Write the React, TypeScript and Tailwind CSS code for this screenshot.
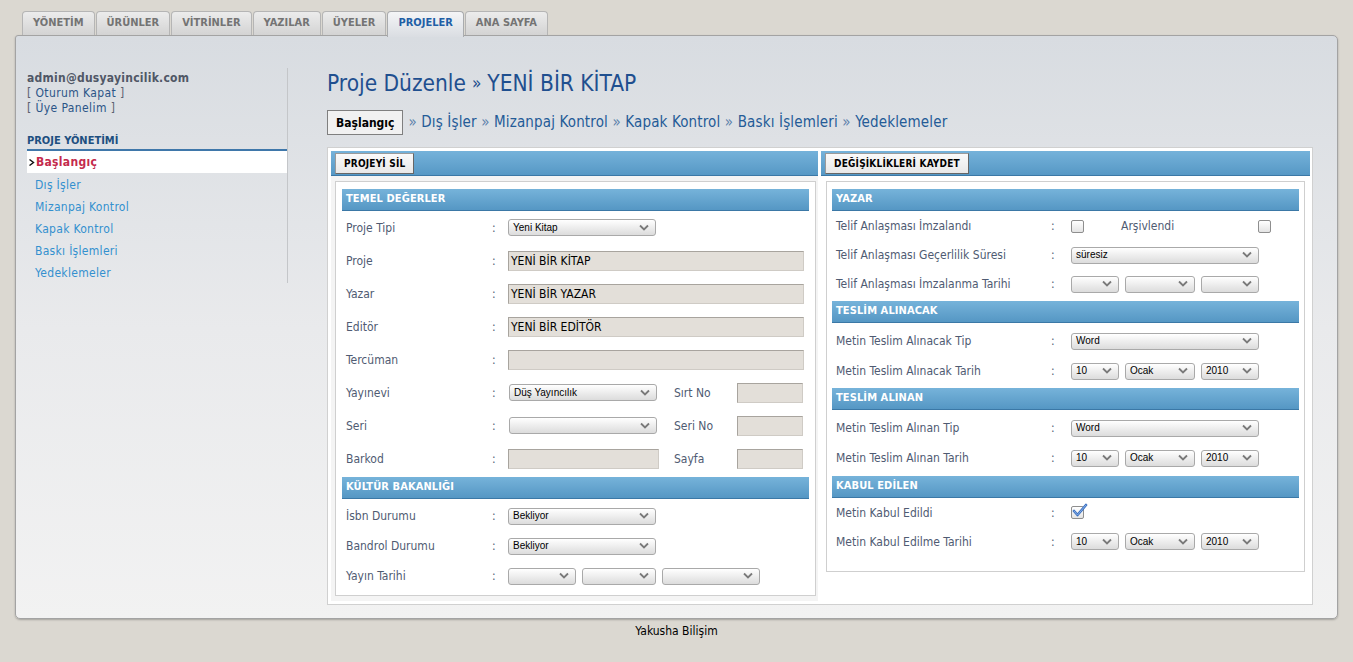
import React from "react";

const F = "font-['DejaVu_Sans_Condensed','DejaVu_Sans',sans-serif]";

function Chevron() {
  return (
    <svg width="10" height="7" viewBox="0 0 10 7" className="absolute right-[6px] top-1/2 -translate-y-1/2">
      <polyline points="1,1 5,5 9,1" fill="none" stroke="#7a7a7a" strokeWidth="1.8" />
    </svg>
  );
}

function Sel({ w, text = "" }: { w: string; text?: string }) {
  return (
    <div
      className={`relative flex h-[17px] shrink-0 items-center rounded-[3px] border border-[#a9a9a9] bg-gradient-to-b from-[#ffffff] to-[#dcdcdc] pl-[4px] font-['Liberation_Sans',Arial,sans-serif] text-[10px] text-black ${w}`}
    >
      <span className="leading-none">{text}</span>
      <Chevron />
    </div>
  );
}

function Inp({ w, text = "" }: { w: string; text?: string }) {
  return (
    <div
      className={`flex h-[20px] shrink-0 items-center border border-t-[#a8a49e] border-l-[#a8a49e] border-r-[#cfcbc5] border-b-[#cfcbc5] bg-[#e3dfd9] pl-[2px] text-[12px] text-black ${w}`}
    >
      {text}
    </div>
  );
}

function Check({ checked = false }: { checked?: boolean }) {
  return (
    <div className="relative h-[13px] w-[13px] shrink-0 rounded-[2px] border border-[#8e8e8e] bg-gradient-to-b from-[#ffffff] to-[#e4e4e4]">
      {checked && (
        <svg width="16" height="14" viewBox="0 0 16 14" className="absolute left-[0px] top-[-4px]">
          <path d="M2 8 L5.5 12 L14 2" fill="none" stroke="#3a6fc0" strokeWidth="2.6" strokeLinecap="round" strokeLinejoin="round" />
          <path d="M2 8 L5.5 12 L14 2" fill="none" stroke="#8fb6ea" strokeWidth="0.9" strokeLinecap="round" strokeLinejoin="round" />
        </svg>
      )}
    </div>
  );
}

function SecHead({ title, cls = "" }: { title: string; cls?: string }) {
  return (
    <div
      className={`flex h-[22px] items-center border-b border-[#3b78a6] bg-gradient-to-b from-[#76b3da] to-[#5597c4] pl-[4px] text-[11px] font-bold tracking-[0.1px] text-white ${cls}`}
    >
      {title}
    </div>
  );
}

function LRow({ label, h, children }: { label: string; h: string; children?: React.ReactNode }) {
  return (
    <div className={`flex items-center pl-[4px] ${h}`}>
      <div className="w-[146px] shrink-0 text-[12px] text-[#4f5b72]">{label}</div>
      <div className="w-[16px] shrink-0 text-[12px] text-[#4f5b72]">:</div>
      <div className="flex items-center">{children}</div>
    </div>
  );
}

function RRow({ label, h, children, cls = "" }: { label: string; h: string; children?: React.ReactNode; cls?: string }) {
  return (
    <div className={`flex items-center pl-[4px] ${h} ${cls}`}>
      <div className="w-[215px] shrink-0 text-[12px] text-[#4f5b72]">{label}</div>
      <div className="w-[20px] shrink-0 text-[12px] text-[#4f5b72]">:</div>
      <div className="flex items-center">{children}</div>
    </div>
  );
}

function Btn({ children }: { children: React.ReactNode }) {
  return (
    <div className="flex h-[21px] items-center border border-[#666] border-l-[#9a9a9a] border-t-[#9a9a9a] bg-gradient-to-b from-[#fafafa] to-[#e8e8e8] px-[8px] text-[10px] font-bold tracking-[0.2px] text-black">
      {children}
    </div>
  );
}

const tabs = ["YÖNETİM", "ÜRÜNLER", "VİTRİNLER", "YAZILAR", "ÜYELER", "PROJELER", "ANA SAYFA"];

export default function App() {
  return (
    <div className={`min-h-[662px] w-full bg-[#dbd8d1] ${F}`}>
      <div className="px-[15px] pt-[11px]">
        {/* tabs */}
        <div className="relative z-10 flex h-[24px] items-end gap-[1px] pl-[7px]">
          {tabs.map((t) =>
            t === "PROJELER" ? (
              <div
                key={t}
                className="mb-[-2px] flex h-[26px] items-center rounded-t-[4px] border border-b-0 border-[#a9abae] bg-gradient-to-b from-[#f4f5f7] to-[#dadde2] px-[10px] pb-[2px] text-[11px] font-bold text-[#1f5fa6]"
              >
                {t}
              </div>
            ) : (
              <div
                key={t}
                className="flex h-[24px] items-center rounded-t-[4px] border border-b-0 border-[#b5b5b5] bg-gradient-to-b from-[#ececec] to-[#d3d3d3] px-[10px] text-[11px] font-bold text-[#747474]"
              >
                {t}
              </div>
            )
          )}
        </div>

        {/* panel */}
        <div className="flex h-[584px] rounded-[5px] rounded-tl-[3px] border border-[#a3a3a3] bg-gradient-to-b from-[#d8dce1] via-[#e9eaec] to-[#f2f2f2] pl-[11px] pr-[24px] pt-[32px] shadow-[0_1px_2px_rgba(0,0,0,0.25)]">
          {/* sidebar */}
          <div className="w-[261px] shrink-0">
            <div className="h-[215px] border-r border-[#c4c6c9] pr-0">
              <div className="pt-[3px] text-[12px] font-bold leading-[15px] tracking-[0.25px] text-[#505766]">admin@dusyayincilik.com</div>
              <div className="text-[12px] leading-[15px] tracking-[0.4px] text-[#5b6270]">
                [ <span className="text-[#2b5587]">Oturum Kapat</span> ]
              </div>
              <div className="text-[12px] leading-[15px] tracking-[0.4px] text-[#5b6270]">
                [ <span className="text-[#2b5587]">Üye Panelim</span> ]
              </div>
              <div className="mt-[18px] border-b-2 border-[#3f77aa] pb-[1px] text-[11px] font-bold leading-[14px] text-[#1d4f80]">
                PROJE YÖNETİMİ
              </div>
              <div className="flex h-[22px] items-center bg-white pl-[2px] text-[12px] font-bold tracking-[0.3px] text-[#c42a4c]">
                <svg width="6" height="7" viewBox="0 0 6 7" className="mr-[1px]">
                  <path d="M0.5 0.5 L4.5 3.5 L0.5 6.5" fill="none" stroke="#111" strokeWidth="1.4" />
                </svg>
                Başlangıç
              </div>
              <div className="pt-[1px]">
                {["Dış İşler", "Mizanpaj Kontrol", "Kapak Kontrol", "Baskı İşlemleri", "Yedeklemeler"].map((m) => (
                  <div key={m} className="flex h-[22px] items-center pl-[8px] text-[12px] tracking-[0.3px] text-[#3390cf]">
                    {m}
                  </div>
                ))}
              </div>
            </div>
          </div>

          {/* main */}
          <div className="ml-[39px] flex-1">
            <div className="flex h-[28px] items-center pt-[2px] text-[22.5px] leading-none text-[#1f4f8f]">
              Proje Düzenle <span className="mx-[6px] text-[17px]">»</span> YENİ BİR KİTAP
            </div>
            <div className="mt-[14px] flex h-[25px] items-center">
              <div className="flex h-[25px] items-center border border-[#7f7f7f] bg-[#f1f1f1] px-[8px] text-[12px] font-bold text-black">
                Başlangıç
              </div>
              <div className="ml-[5px] text-[15px] tracking-[0.15px] text-[#245b97]">
                <span className="text-[#5b7faa]">»</span> Dış İşler <span className="text-[#5b7faa]">»</span> Mizanpaj Kontrol{" "}
                <span className="text-[#5b7faa]">»</span> Kapak Kontrol <span className="text-[#5b7faa]">»</span> Baskı İşlemleri{" "}
                <span className="text-[#5b7faa]">»</span> Yedeklemeler
              </div>
            </div>

            {/* form container */}
            <div className="mt-[12px] flex h-[458px] w-[986px] gap-[3px] border border-[#d0d0d0] bg-white p-[3px]">
              {/* left column */}
              <div className="w-[487px] shrink-0 bg-[#f4f4f4]">
                <div className="flex h-[25px] items-center border-b border-[#3b78a6] bg-gradient-to-b from-[#75b2da] to-[#5698c5] pl-[4px]">
                  <Btn>PROJEYİ SİL</Btn>
                </div>
                <div className="ml-[4px] mt-[5px] w-[481px] border border-[#cfcfcf] bg-white px-[6px] pb-[4px] pt-[7px]">
                  <SecHead title="TEMEL DEĞERLER" />
                  <LRow label="Proje Tipi" h="h-[33px]">
                    <Sel w="w-[148px]" text="Yeni Kitap" />
                  </LRow>
                  <LRow label="Proje" h="h-[33px]">
                    <Inp w="w-[296px]" text="YENİ BİR KİTAP" />
                  </LRow>
                  <LRow label="Yazar" h="h-[33px]">
                    <Inp w="w-[296px]" text="YENİ BİR YAZAR" />
                  </LRow>
                  <LRow label="Editör" h="h-[33px]">
                    <Inp w="w-[296px]" text="YENİ BİR EDİTÖR" />
                  </LRow>
                  <LRow label="Tercüman" h="h-[33px]">
                    <Inp w="w-[296px]" />
                  </LRow>
                  <LRow label="Yayınevi" h="h-[33px]">
                    <div className="ml-[1px]">
                      <Sel w="w-[148px]" text="Düş Yayıncılık" />
                    </div>
                    <div className="ml-[17px] w-[63px] text-[12px] text-[#4f5b72]">Sırt No</div>
                    <Inp w="w-[66px]" />
                  </LRow>
                  <LRow label="Seri" h="h-[33px]">
                    <div className="ml-[1px]">
                      <Sel w="w-[148px]" />
                    </div>
                    <div className="ml-[17px] w-[63px] text-[12px] text-[#4f5b72]">Seri No</div>
                    <Inp w="w-[66px]" />
                  </LRow>
                  <LRow label="Barkod" h="h-[33px]">
                    <Inp w="w-[151px]" />
                    <div className="ml-[15px] w-[63px] text-[12px] text-[#4f5b72]">Sayfa</div>
                    <Inp w="w-[66px]" />
                  </LRow>
                  <SecHead title="KÜLTÜR BAKANLIĞI" cls="mt-[2px]" />
                  <div className="mt-[2px]">
                    <LRow label="İsbn Durumu" h="h-[30px]">
                      <Sel w="w-[148px]" text="Bekliyor" />
                    </LRow>
                    <LRow label="Bandrol Durumu" h="h-[30px]">
                      <Sel w="w-[148px]" text="Bekliyor" />
                    </LRow>
                    <LRow label="Yayın Tarihi" h="h-[30px]">
                      <div className="flex gap-[6px]">
                        <Sel w="w-[68px]" />
                        <Sel w="w-[74px]" />
                        <Sel w="w-[98px]" />
                      </div>
                    </LRow>
                  </div>
                </div>
              </div>

              {/* right column */}
              <div className="w-[489px] shrink-0 bg-white">
                <div className="flex h-[25px] items-center border-b border-[#3b78a6] bg-gradient-to-b from-[#75b2da] to-[#5698c5] pl-[4px]">
                  <Btn>DEĞİŞİKLİKLERİ KAYDET</Btn>
                </div>
                <div className="ml-[5px] mt-[5px] w-[479px] border border-[#cfcfcf] bg-white px-[5px] pb-[15px] pt-[7px]">
                  <SecHead title="YAZAR" />
                  <RRow label="Telif Anlaşması İmzalandı" h="h-[30px]">
                    <Check />
                    <div className="ml-[37px] w-[137px] text-[12px] text-[#4f5b72]">Arşivlendi</div>
                    <Check />
                  </RRow>
                  <RRow label="Telif Anlaşması Geçerlilik Süresi" h="h-[28px]">
                    <Sel w="w-[188px]" text="süresiz" />
                  </RRow>
                  <RRow label="Telif Anlaşması İmzalanma Tarihi" h="h-[30px]">
                    <div className="flex gap-[6px]">
                      <Sel w="w-[48px]" />
                      <Sel w="w-[70px]" />
                      <Sel w="w-[58px]" />
                    </div>
                  </RRow>
                  <SecHead title="TESLİM ALINACAK" cls="mt-[2px]" />
                  <RRow label="Metin Teslim Alınacak Tip" h="h-[30px]" cls="mt-[3px]">
                    <Sel w="w-[188px]" text="Word" />
                  </RRow>
                  <RRow label="Metin Teslim Alınacak Tarih" h="h-[30px]">
                    <div className="flex gap-[6px]">
                      <Sel w="w-[48px]" text="10" />
                      <Sel w="w-[70px]" text="Ocak" />
                      <Sel w="w-[58px]" text="2010" />
                    </div>
                  </RRow>
                  <SecHead title="TESLİM ALINAN" cls="mt-[2px]" />
                  <RRow label="Metin Teslim Alınan Tip" h="h-[30px]" cls="mt-[3px]">
                    <Sel w="w-[188px]" text="Word" />
                  </RRow>
                  <RRow label="Metin Teslim Alınan Tarih" h="h-[30px]">
                    <div className="flex gap-[6px]">
                      <Sel w="w-[48px]" text="10" />
                      <Sel w="w-[70px]" text="Ocak" />
                      <Sel w="w-[58px]" text="2010" />
                    </div>
                  </RRow>
                  <SecHead title="KABUL EDİLEN" cls="mt-[3px]" />
                  <RRow label="Metin Kabul Edildi" h="h-[29px]">
                    <Check checked />
                  </RRow>
                  <RRow label="Metin Kabul Edilme Tarihi" h="h-[29px]">
                    <div className="flex gap-[6px]">
                      <Sel w="w-[48px]" text="10" />
                      <Sel w="w-[70px]" text="Ocak" />
                      <Sel w="w-[58px]" text="2010" />
                    </div>
                  </RRow>
                </div>
              </div>
            </div>
          </div>
        </div>

        {/* footer */}
        <div className="pt-[3px] text-center text-[12px] text-black">Yakusha Bilişim</div>
      </div>
    </div>
  );
}
